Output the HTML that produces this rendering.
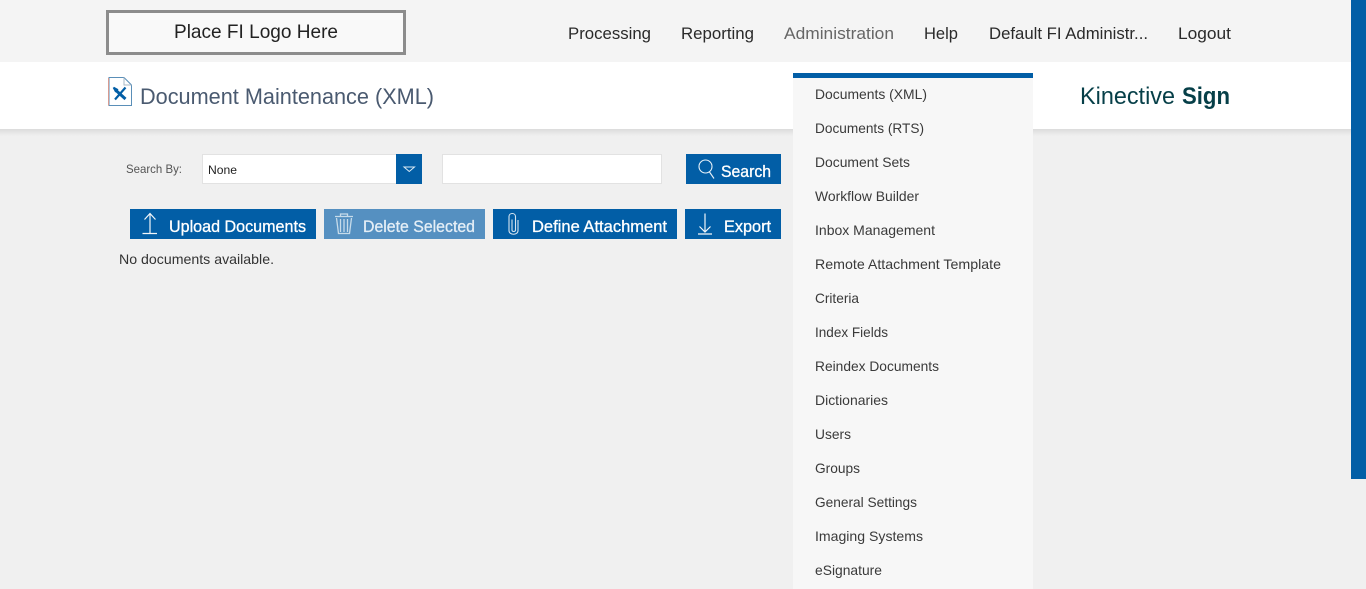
<!DOCTYPE html>
<html lang="en">
<head>
<meta charset="utf-8">
<title>Document Maintenance (XML)</title>
<style>
html,body{margin:0;padding:0;width:1366px;height:589px;overflow:hidden;background:#f0f0f0}
svg{display:block;font-family:"Liberation Sans",Arial,sans-serif}
.nav{font-size:17px;fill:#2a2a2a}
.mi{font-size:14px;fill:#3a3a3a}
.btn{font-size:16.500px;fill:#fff;stroke:#fff;stroke-width:.3}
</style>
</head>
<body>
<svg width="1366" height="589" viewBox="0 0 1366 589" xmlns="http://www.w3.org/2000/svg">
<defs>
<linearGradient id="sh" x1="0" y1="0" x2="0" y2="1"><stop offset="0" stop-color="#dcdcdc"/><stop offset="1" stop-color="#f0f0f0"/></linearGradient>
</defs>
<rect width="1366" height="589" fill="#f0f0f0"/>
<rect width="1366" height="62" fill="#f4f4f4"/>
<rect y="62" width="1366" height="67" fill="#fff"/>
<rect y="129" width="1366" height="7" fill="url(#sh)"/>
<rect x="1351" width="15" height="479" fill="#025ea6"/>

<!-- logo -->
<rect x="107.500" y="11.500" width="297" height="42" fill="#f9f9f9" stroke="#8c8c8c" stroke-width="3"/>
<text x="174" y="38" font-size="19.500" fill="#222" textLength="164" lengthAdjust="spacingAndGlyphs">Place FI Logo Here</text>

<!-- nav -->
<text class="nav" x="568" y="39" textLength="83" lengthAdjust="spacingAndGlyphs">Processing</text>
<text class="nav" x="681" y="39" textLength="73" lengthAdjust="spacingAndGlyphs">Reporting</text>
<text class="nav" x="784" y="39" textLength="110" lengthAdjust="spacingAndGlyphs" style="fill:#666">Administration</text>
<text class="nav" x="924" y="39" textLength="34" lengthAdjust="spacingAndGlyphs">Help</text>
<text class="nav" x="989" y="39" textLength="159" lengthAdjust="spacingAndGlyphs">Default FI Administr...</text>
<text class="nav" x="1178" y="39" textLength="53" lengthAdjust="spacingAndGlyphs">Logout</text>

<!-- title icon -->
<path d="M109 77.500H124L131.500 85V105.500H109Z" fill="#fff" stroke="#5a8fb8" stroke-width="1"/>
<path d="M124 77.500V85H131.500" fill="none" stroke="#a9b8c6" stroke-width="1"/>
<path d="M108.500 78V105.500" stroke="#d79a90" stroke-width="1"/>
<path d="M115.500 90L125.500 99" stroke="#025ea6" stroke-width="3"/>
<path d="M125.500 87.500L115 99.500" stroke="#025ea6" stroke-width="2.200"/>
<path d="M113.500 87.500L116 92M113.500 87.500L118 90" stroke="#025ea6" stroke-width="1.800"/>
<text x="140" y="104" font-size="22.500" fill="#4a5a70" textLength="294" lengthAdjust="spacingAndGlyphs">Document Maintenance (XML)</text>

<!-- brand -->
<text x="1080" y="104" font-size="24" fill="#063f48" textLength="95" lengthAdjust="spacingAndGlyphs">Kinective</text>
<text x="1182" y="104" font-size="24" font-weight="700" fill="#063f48" textLength="48" lengthAdjust="spacingAndGlyphs">Sign</text>

<!-- search row -->
<text x="126" y="173" font-size="12" fill="#555" textLength="56" lengthAdjust="spacingAndGlyphs">Search By:</text>
<rect x="202.500" y="154.500" width="219" height="29" fill="#fff" stroke="#e2e2e2"/>
<text x="208" y="174" font-size="12" fill="#222" textLength="29" lengthAdjust="spacingAndGlyphs">None</text>
<rect x="396" y="154" width="26" height="30" fill="#025ea6"/>
<path d="M404 167H414.500L409.250 171.500Z" fill="none" stroke="#dbe9f4" stroke-width="1"/>
<rect x="442.500" y="154.500" width="219" height="29" fill="#fff" stroke="#e2e2e2"/>

<rect x="686" y="154" width="95" height="30" fill="#025ea6"/>
<circle cx="705.500" cy="166.500" r="6.500" fill="none" stroke="#e8f1f8" stroke-width="1.100"/>
<path d="M709.500 172L714 178.500" stroke="#e8f1f8" stroke-width="1.100"/>
<text class="btn" x="721" y="177" textLength="50" lengthAdjust="spacingAndGlyphs">Search</text>

<!-- action buttons -->
<rect x="130" y="209" width="186" height="30" fill="#025ea6"/>
<path d="M150 233V214M144.500 219.500L150 213.500L155.500 219.500M142.500 233.500H157" fill="none" stroke="#f2f6fa" stroke-width="1.200"/>
<text class="btn" x="169" y="232" textLength="137" lengthAdjust="spacingAndGlyphs">Upload Documents</text>

<rect x="324" y="209" width="161" height="30" fill="#5590c1"/>
<path d="M335 216.500H353M340.500 216V214H347.500V216M336.500 218L338.500 233.500H349.500L351.500 218M340.500 219V232M344 219V232M347.500 219V232" fill="none" stroke="#c6dbea" stroke-width="1.300"/>
<text class="btn" x="363" y="232" textLength="112" lengthAdjust="spacingAndGlyphs" style="fill:#e4eef6;stroke:#e4eef6">Delete Selected</text>

<rect x="493" y="209" width="184" height="30" fill="#025ea6"/>
<path d="M512 219.500V230C512 232 515.500 232 515.500 230V216.500C515.500 212.500 509 212.500 509 216.500V230.500C509 235.500 518 235.500 518 230.500V220" fill="none" stroke="#d5e4f0" stroke-width="1.100"/>
<text class="btn" x="532" y="232" textLength="135" lengthAdjust="spacingAndGlyphs">Define Attachment</text>

<rect x="685" y="209" width="96" height="30" fill="#025ea6"/>
<path d="M705 213.500V232M699.500 226.500L705 232L710.500 226.500M698 234H712" fill="none" stroke="#f2f6fa" stroke-width="1.200"/>
<text class="btn" x="724" y="232" textLength="47" lengthAdjust="spacingAndGlyphs">Export</text>

<text x="119" y="264" font-size="14" fill="#333" textLength="155" lengthAdjust="spacingAndGlyphs">No documents available.</text>

<!-- dropdown -->
<rect x="793" y="73" width="240" height="516" fill="#f7f7f7"/>
<rect x="793" y="73" width="240" height="5" fill="#025ea6"/>
<text class="mi" x="815" y="99" textLength="112" lengthAdjust="spacingAndGlyphs">Documents (XML)</text>
<text class="mi" x="815" y="133" textLength="109" lengthAdjust="spacingAndGlyphs">Documents (RTS)</text>
<text class="mi" x="815" y="167" textLength="95" lengthAdjust="spacingAndGlyphs">Document Sets</text>
<text class="mi" x="815" y="201" textLength="104" lengthAdjust="spacingAndGlyphs">Workflow Builder</text>
<text class="mi" x="815" y="235" textLength="120" lengthAdjust="spacingAndGlyphs">Inbox Management</text>
<text class="mi" x="815" y="269" textLength="186" lengthAdjust="spacingAndGlyphs">Remote Attachment Template</text>
<text class="mi" x="815" y="303" textLength="44" lengthAdjust="spacingAndGlyphs">Criteria</text>
<text class="mi" x="815" y="337" textLength="73" lengthAdjust="spacingAndGlyphs">Index Fields</text>
<text class="mi" x="815" y="371" textLength="124" lengthAdjust="spacingAndGlyphs">Reindex Documents</text>
<text class="mi" x="815" y="405" textLength="73" lengthAdjust="spacingAndGlyphs">Dictionaries</text>
<text class="mi" x="815" y="439" textLength="36" lengthAdjust="spacingAndGlyphs">Users</text>
<text class="mi" x="815" y="473" textLength="45" lengthAdjust="spacingAndGlyphs">Groups</text>
<text class="mi" x="815" y="507" textLength="102" lengthAdjust="spacingAndGlyphs">General Settings</text>
<text class="mi" x="815" y="541" textLength="108" lengthAdjust="spacingAndGlyphs">Imaging Systems</text>
<text class="mi" x="815" y="575" textLength="67" lengthAdjust="spacingAndGlyphs">eSignature</text>
</svg>
</body>
</html>
